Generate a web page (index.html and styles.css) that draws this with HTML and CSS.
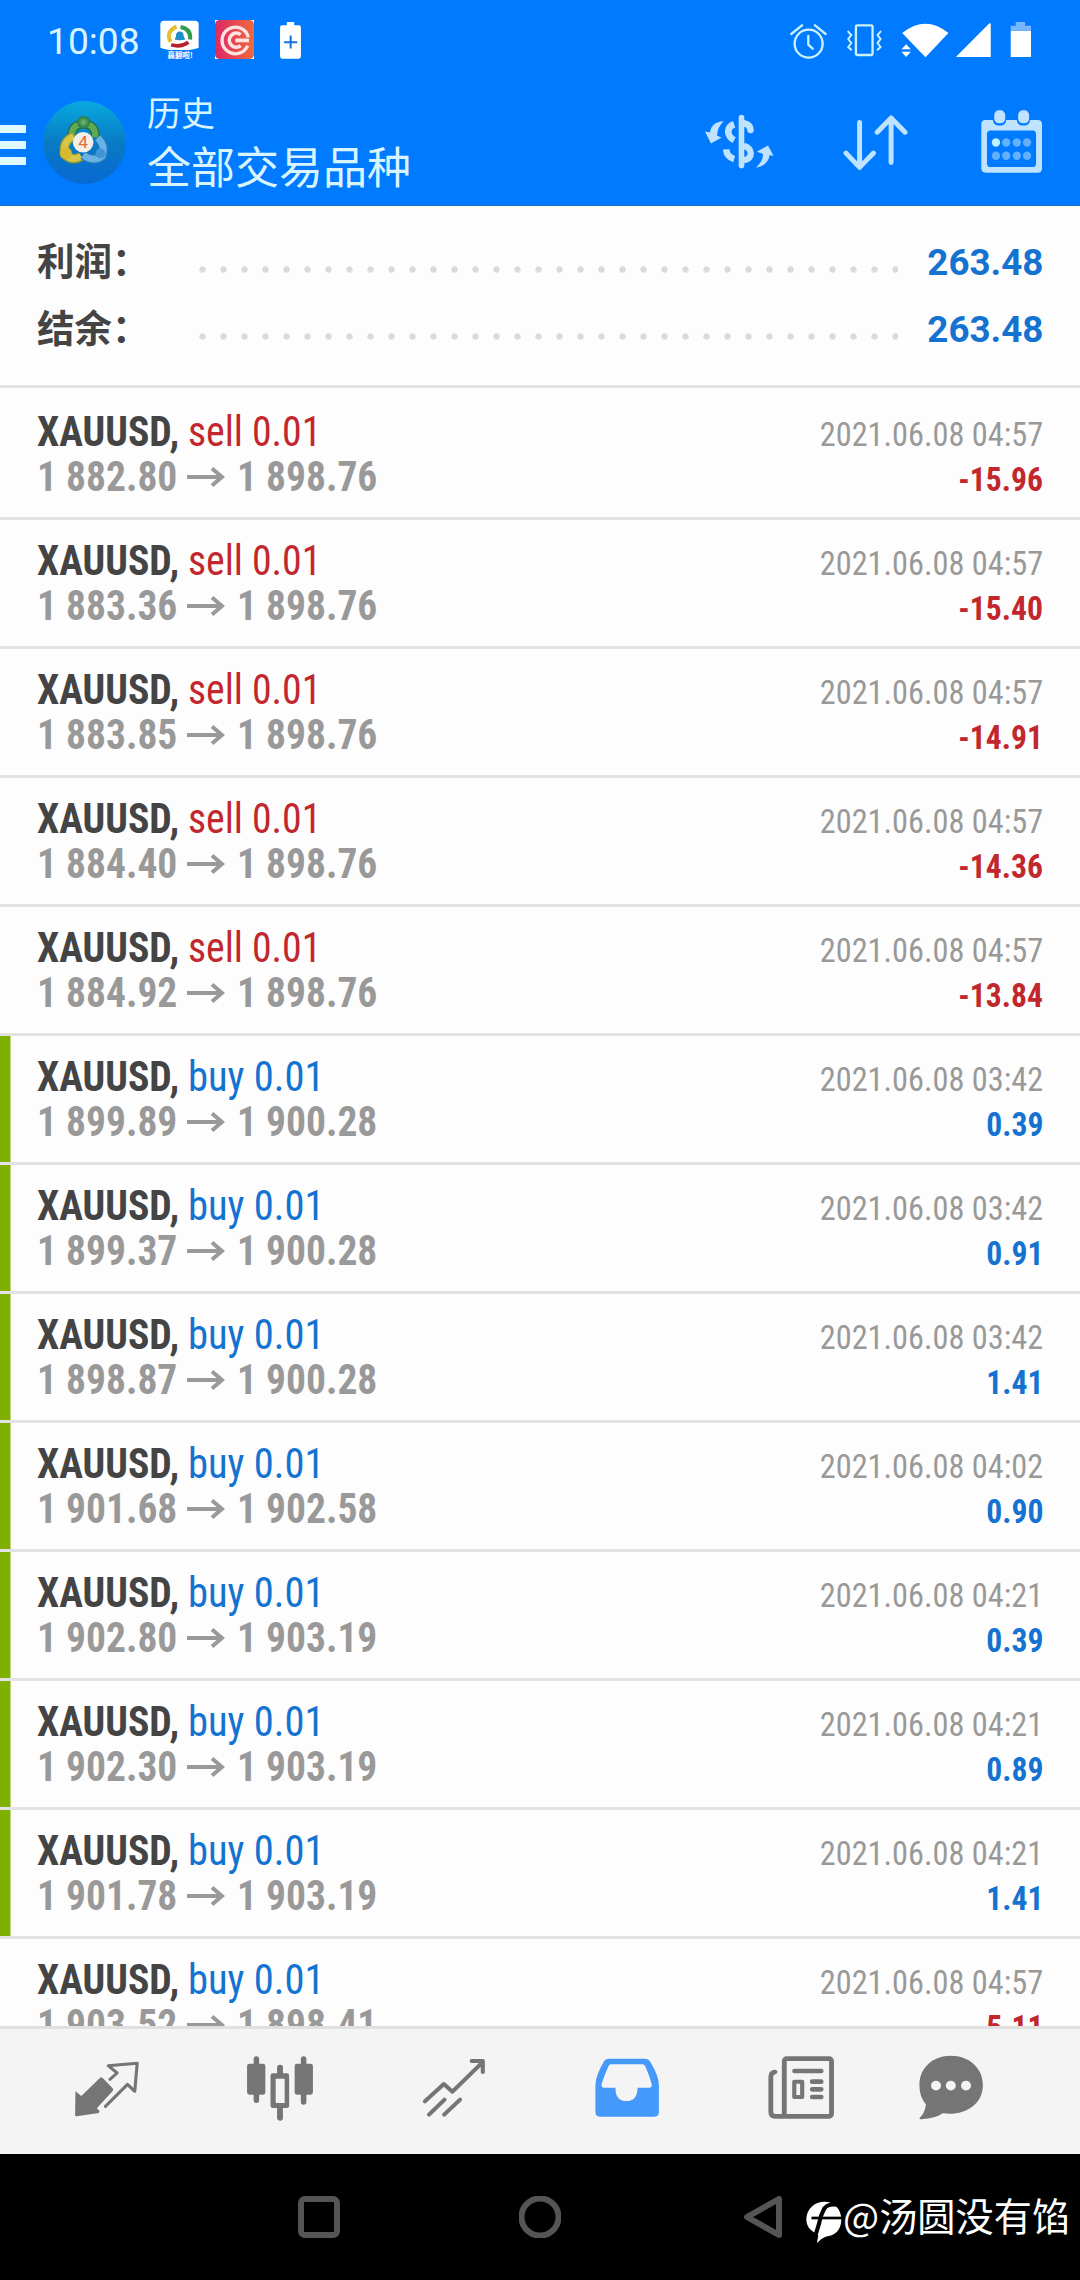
FILE: index.html
```html
<!DOCTYPE html>
<html lang="zh-CN">
<head>
<meta charset="utf-8">
<title>历史</title>
<link rel="stylesheet" href="styles.css">
</head>
<body>
<div class="screen">
  <header class="header">
    <div class="status">
      <div class="status-left">
        <span class="clock">10:08</span>
        <svg class="app-quotes" viewBox="480 58 118 118"><path fill="#fff" d="M492 60h94q11 0 11 11v70q0 2-28 8h-60q-28-6-28-8V71q0-11 11-11z"/><path fill="none" stroke="#e3c02e" stroke-width="12" d="M512 124q-16-30 18-46"/><path fill="none" stroke="#2f9e4f" stroke-width="12" d="M542 79q33 6 29 38"/><path fill="none" stroke="#b8202c" stroke-width="11" d="M514 133q28 9 52-8"/><path fill="#1d8fc8" d="M524 117q5-6 5-14 0-9 11-10 11 1 11 10 0 8 6 14-17 5-33 0z"/><text x="541" y="172" text-anchor="middle" font-size="24" font-weight="700" fill="#fff" textLength="76" lengthAdjust="spacingAndGlyphs">赢翻啦!</text></svg>
        <svg class="app-c" viewBox="645 60 117 117"><defs><linearGradient id="cg"><stop stop-color="#dc2866"/><stop offset="1" stop-color="#ef6a3c"/></linearGradient></defs><path fill="#fff" d="M645 60h117v117H645z"/><rect x="645" y="60" width="117" height="117" rx="14" fill="url(#cg)"/><path fill="none" stroke="#ffe3e0" stroke-width="10" d="M745 112A40 40 0 1 0 743 137"/><path fill="none" stroke="#ffe3e0" stroke-width="11" d="M722 104A21 21 0 1 0 722 137M706 121h41"/></svg>
        <svg class="battery-plus" viewBox="839 66 62 110"><path fill="#fff" d="M859 66h22v10h14q6 0 6 6v86q0 7-6 7h-50q-6 0-6-7V82q0-6 6-6h14z"/><path stroke="#1473d8" stroke-width="6" d="M851 126h39M870.500 106v39"/></svg>
      </div>
      <svg class="status-right" viewBox="330 60 730 120" fill="none">
        <g stroke="#cbf1ff" stroke-width="7" stroke-linecap="round"><circle cx="386" cy="131" r="42"/><path d="M385 108v26l13 12M334 102l32-26M405 76l32 26"/><rect x="528" y="76" width="50" height="89" rx="4"/><path d="M505 95l9 10-9 12 9 12-9 12 9 8M602 95l-9 10 9 12-9 12 9 12-9 8" stroke-width="6"/></g>
        <path fill="#fff" d="M667 99q70-56 139 0l-69 73zM665 148l14-15 14 15zM665 155h28l-14 16zM829 170L929 70q4-2 4 2v99h-102q-4 0-2-1zM993 92h61v79h-61z"/><path fill="#79b7fc" d="M1008 66h28v11h18v15h-61V77h15z"/>
      </svg>
    </div>
    <div class="toolbar">
      <div class="menu"><i></i><i></i><i></i></div>
      <svg class="logo" viewBox="130 300 250 256"><defs><linearGradient id="sky" x2="0" y2="1"><stop stop-color="#08aae0"/><stop offset=".5" stop-color="#087bc4"/><stop offset="1" stop-color="#0869d1"/></linearGradient><radialGradient id="gr"><stop stop-color="#73b978"/><stop offset="1" stop-color="#247842"/></radialGradient></defs><circle cx="255" cy="428" r="125" fill="url(#sky)"/><path fill="none" stroke="#217045" stroke-width="27" d="M217 412q-3-38 35-40 38 2 35 40"/><path fill="none" stroke="#61a951" stroke-width="19" d="M217 412q-3-38 35-40 38 2 35 40"/><path fill="none" stroke="#8e993c" stroke-width="28" d="M222 409q-34 15-27 55 24 22 50 6"/><path fill="none" stroke="#d7c646" stroke-width="20" d="M222 409q-34 15-27 55 24 22 50 6"/><path fill="none" stroke="#2879ba" stroke-width="28" d="M251 466q31 23 57 3 12-31-13-55"/><path fill="none" stroke="#67b3e5" stroke-width="20" d="M251 466q31 23 57 3 12-31-13-55"/><circle cx="252" cy="367" r="19" fill="url(#gr)"/><circle cx="199" cy="460" r="18" fill="#d7ba2e"/><circle cx="303" cy="461" r="15" fill="#4194d6"/><circle cx="251" cy="427" r="31" fill="#f4eee9"/><text x="251" y="446" text-anchor="middle" font-size="52" fill="#e06c3b">4</text></svg>
      <div class="titles"><h1>历史</h1><p>全部交易品种</p></div>
      <svg class="tool-currency" viewBox="77 342 208 164"><g fill="none" stroke="#bfe2ff" stroke-width="20"><path d="M187 352v144" stroke-width="17" stroke-linecap="round"/><path d="M165 372q-18 6-18 23 1 16 18 25"/><path d="M194 369q19 3 20 20" stroke-linecap="round"/><path d="M141 448q1 22 24 29"/><path d="M194 437q19 6 21 22 0 18-21 22" stroke-width="19"/></g><path fill="#bfe2ff" d="M133 362q-38 4-41 35l-15-3 18 36 32-18-13-5q-2-22 19-45zM231 503q37-7 41-38l12 3-17-32-34 19 18 6q4 18-20 42z"/></svg>
      <svg class="tool-sort" viewBox="490 342 196 170" fill="none" stroke="#bfe2ff" stroke-width="15" stroke-linecap="round" stroke-linejoin="round"><path d="M540 367v134M499 459l41 43 42-43M635 487V354M593 396l42-43 42 43"/></svg>
      <svg class="tool-calendar" viewBox="905 330 184 190"><path fill="#bfe2ff" fill-rule="evenodd" d="M919 360h157q13 0 13 13v133q0 13-13 13H919q-13 0-13-13V373q0-13 13-13zM934 392q-11 0-11 11v88q0 11 11 11h126q11 0 11-11v-88q0-11-11-11z"/><rect x="941" y="328" width="40" height="49" rx="17" fill="#007aff"/><rect x="1013" y="328" width="40" height="49" rx="17" fill="#007aff"/><rect x="945" y="331" width="33" height="39" rx="14" fill="#bfe2ff"/><rect x="1017" y="331" width="33" height="39" rx="14" fill="#bfe2ff"/><circle cx="950" cy="428" r="12.500" fill="#bff1ff"/><g fill="#63b0ff"><circle cx="981" cy="428" r="12.500"/><circle cx="1013" cy="428" r="12.500"/><circle cx="1044" cy="428" r="12.500"/><circle cx="950" cy="468" r="12.500"/><circle cx="981" cy="468" r="12.500"/><circle cx="1013" cy="468" r="12.500"/><circle cx="1044" cy="468" r="12.500"/></g></svg>
    </div>
  </header>

  <main class="content">
    <section class="summary">
      <div class="sum-row"><b>利润：</b><i class="dots"></i><strong>263.48</strong></div>
      <div class="sum-row"><b>结余：</b><i class="dots"></i><strong>263.48</strong></div>
    </section>
    <svg width="0" height="0" class="defs"><symbol id="arrow" viewBox="0 0 38 20"><path d="M0 10h35M25 1.500l10 8.500-10 8.500" fill="none" stroke="#999" stroke-width="4"/></symbol></svg>
    <section class="deals">
      <article class="deal first"><div class="line"><b>XAUUSD,</b><span class="sell">sell 0.01</span><time>2021.06.08 04:57</time></div><div class="line price"><span>1 882.80</span><svg><use href="#arrow"/></svg><span>1 898.76</span><em class="loss">-15.96</em></div></article>
      <article class="deal"><div class="line"><b>XAUUSD,</b><span class="sell">sell 0.01</span><time>2021.06.08 04:57</time></div><div class="line price"><span>1 883.36</span><svg><use href="#arrow"/></svg><span>1 898.76</span><em class="loss">-15.40</em></div></article>
      <article class="deal"><div class="line"><b>XAUUSD,</b><span class="sell">sell 0.01</span><time>2021.06.08 04:57</time></div><div class="line price"><span>1 883.85</span><svg><use href="#arrow"/></svg><span>1 898.76</span><em class="loss">-14.91</em></div></article>
      <article class="deal"><div class="line"><b>XAUUSD,</b><span class="sell">sell 0.01</span><time>2021.06.08 04:57</time></div><div class="line price"><span>1 884.40</span><svg><use href="#arrow"/></svg><span>1 898.76</span><em class="loss">-14.36</em></div></article>
      <article class="deal"><div class="line"><b>XAUUSD,</b><span class="sell">sell 0.01</span><time>2021.06.08 04:57</time></div><div class="line price"><span>1 884.92</span><svg><use href="#arrow"/></svg><span>1 898.76</span><em class="loss">-13.84</em></div></article>
      <article class="deal tp"><div class="line"><b>XAUUSD,</b><span class="buy">buy 0.01</span><time>2021.06.08 03:42</time></div><div class="line price"><span>1 899.89</span><svg><use href="#arrow"/></svg><span>1 900.28</span><em>0.39</em></div></article>
      <article class="deal tp"><div class="line"><b>XAUUSD,</b><span class="buy">buy 0.01</span><time>2021.06.08 03:42</time></div><div class="line price"><span>1 899.37</span><svg><use href="#arrow"/></svg><span>1 900.28</span><em>0.91</em></div></article>
      <article class="deal tp"><div class="line"><b>XAUUSD,</b><span class="buy">buy 0.01</span><time>2021.06.08 03:42</time></div><div class="line price"><span>1 898.87</span><svg><use href="#arrow"/></svg><span>1 900.28</span><em>1.41</em></div></article>
      <article class="deal tp"><div class="line"><b>XAUUSD,</b><span class="buy">buy 0.01</span><time>2021.06.08 04:02</time></div><div class="line price"><span>1 901.68</span><svg><use href="#arrow"/></svg><span>1 902.58</span><em>0.90</em></div></article>
      <article class="deal tp"><div class="line"><b>XAUUSD,</b><span class="buy">buy 0.01</span><time>2021.06.08 04:21</time></div><div class="line price"><span>1 902.80</span><svg><use href="#arrow"/></svg><span>1 903.19</span><em>0.39</em></div></article>
      <article class="deal tp"><div class="line"><b>XAUUSD,</b><span class="buy">buy 0.01</span><time>2021.06.08 04:21</time></div><div class="line price"><span>1 902.30</span><svg><use href="#arrow"/></svg><span>1 903.19</span><em>0.89</em></div></article>
      <article class="deal tp"><div class="line"><b>XAUUSD,</b><span class="buy">buy 0.01</span><time>2021.06.08 04:21</time></div><div class="line price"><span>1 901.78</span><svg><use href="#arrow"/></svg><span>1 903.19</span><em>1.41</em></div></article>
      <article class="deal"><div class="line"><b>XAUUSD,</b><span class="buy">buy 0.01</span><time>2021.06.08 04:57</time></div><div class="line price"><span>1 903.52</span><svg><use href="#arrow"/></svg><span>1 898.41</span><em class="loss">5.11</em></div></article>
    </section>
  </main>

  <nav class="tabs">
    <svg viewBox="210 460 203 210" preserveAspectRatio="none" fill="#757575"><path d="M220 575l17 14 54-54q4-4 8 0l29 31q3 4 0 8l-46 52 8 8-2 6-65 10q-4 0-4-4z"/><path fill="none" stroke="#757575" stroke-width="9" stroke-linejoin="round" stroke-linecap="round" d="M320 539l21-19-26-22 84-7-7 84-21-21-64 66"/></svg>
    <svg viewBox="712 460 203 210" preserveAspectRatio="none" fill="#757575"><path d="M737 492v-14q0-8 8-8t8 8v14h11q7 0 7 7v79q0 7-7 7h-11v17q0 8-8 8t-8-8v-17h-12q-7 0-7-7v-79q0-7 7-7zM874 492v-14q0-8 8-8t8 8v14h12q7 0 7 7v79q0 7-7 7h-12v22q0 8-8 8t-8-8v-22h-11q-7 0-7-7v-79q0-7 7-7z"/><path fill-rule="evenodd" d="M805 521v-18q0-8 9-8t8 8v18h11q7 0 7 7v90q0 7-7 7h-11v30q0 8-8 8t-9-8v-30h-12q-7 0-7-7v-90q0-7 7-7zM801 537v73h26v-73z"/></svg>
    <svg viewBox="1215 460 203 210" preserveAspectRatio="none" fill="none" stroke="#757575" stroke-width="12" stroke-linecap="round" stroke-linejoin="round"><path d="M1232 605l55-52 25 23 87-88M1368 484h32v33M1244 645l45-45M1288 645l46-45"/></svg>
    <svg viewBox="152 460 203 210" preserveAspectRatio="none"><path fill="#4499fb" fill-rule="evenodd" d="M201 477h104q11 0 16 9 25 43 25 70v81q0 14-13 14H175q-13 0-13-14v-81q0-27 24-70 5-9 15-9zM207 494q-5 0-8 7-10 22-19 52-2 11 7 11h33q0 40 31 40 33 0 33-40h34q9 0 7-11-8-30-18-52-3-7-9-7z"/></svg>
    <svg viewBox="658 460 203 210" preserveAspectRatio="none" fill="none" stroke="#757575" stroke-width="14" stroke-linecap="round" stroke-linejoin="round"><rect x="711" y="477" width="137" height="173" rx="7"/><path d="M684 517q-12 2-12 15v104q0 14 13 14h26"/><path d="M741 514h77M792 546h26M792 569h26M792 592h26"/><path stroke-width="12" d="M740 546h23v46h-23z"/></svg>
    <svg viewBox="1092 460 203 210" preserveAspectRatio="none"><path fill="#757575" d="M1193 468c54 0 93 38 93 87 0 60-52 94-116 86q-22 15-62 18-10 0-4-6 14-13 17-39c-13-16-19-34-19-59 0-49 37-87 91-87z"/><g fill="#f4f4f4"><circle cx="1150" cy="558" r="14.500"/><circle cx="1193" cy="558" r="14.500"/><circle cx="1237" cy="558" r="14.500"/></g></svg>
  </nav>

  <footer class="sysbar">
    <svg class="recent" viewBox="0 0 42 42"><rect x="3" y="3" width="36" height="36" rx="4"/></svg>
    <svg class="home" viewBox="0 0 42 42"><circle cx="21" cy="21" r="18.500"/></svg>
    <svg class="back" viewBox="0 0 39 42"><path d="M36 3v36L4 21z"/></svg>
    <div class="signature"><svg viewBox="771 903 105 126" preserveAspectRatio="none"><path fill="#fff" d="M825 905c28 0 49 22 49 53 0 34-20 50-46 52q-15 6-25 19 1-10 4-22l-15-12c-13-7-20-22-20-37 0-31 24-53 53-53z"/><path fill="none" stroke="#000" stroke-width="12" d="M862 914q-28-4-38 12-11 20-15 45l-10 34"/><path stroke="#000" stroke-width="8" d="M787 954h90"/></svg><span>@汤圆没有馅</span></div>
  </footer>
</div>
</body>
</html>
```
FILE: styles.css
```css
* { box-sizing: border-box; }
body { margin: 0; background: #000; font-family: Roboto, "Noto Sans CJK SC", sans-serif; }
svg { display: block; flex: none; }
.screen { width: 1080px; height: 2280px; display: flex; flex-direction: column; overflow: hidden; }

.header { height: 206px; flex: none; background: #007aff; border-bottom: 1px solid #1c69bd; color: #d8f5ff; }
.status { height: 82px; padding: 20px 47px 0 47px; display: flex; justify-content: space-between; }
.status-left { display: flex; }
.clock { font-size: 37.2px; line-height: 42px; width: 113px; }
.app-quotes { width: 39px; height: 39px; font-family: "Noto Sans CJK SC", sans-serif; }
.app-c { width: 39px; height: 39px; margin-left: 16px; }
.battery-plus { width: 21px; height: 37px; margin: 2px 0 0 26px; }
.status-right { width: 243px; height: 40px; }

.toolbar { height: 123px; display: flex; align-items: flex-start; }
.menu { width: 26px; margin-top: 43px; display: flex; flex-direction: column; gap: 8.5px; }
.menu i { height: 7.5px; background: #dff7ff; }
.logo { width: 83px; height: 85px; margin: 18px 0 0 17px; }
.titles { margin: 9px 0 0 21px; width: 558px; font-family: "Noto Sans CJK SC", sans-serif; }
.titles h1 { margin: 0; font-size: 34px; line-height: 42px; font-weight: 400; }
.titles p { margin: 0; font-size: 44px; line-height: 64px; }
.tool-currency { width: 69px; height: 55px; margin-top: 32px; }
.tool-sort { width: 65px; height: 57px; margin: 32px 0 0 69px; }
.tool-calendar { width: 61px; height: 63px; margin: 28px 0 0 73px; }

.content { height: 1820px; flex: none; overflow: hidden; background: #fdfdfd; }
.summary { height: 182px; padding: 19px 37px 0; border-bottom: 3px solid #e2e2e2; }
.sum-row { height: 67px; display: flex; align-items: center; }
.sum-row b { width: 160px; flex: none; font: 700 37.5px "Noto Sans CJK SC", sans-serif; line-height: 67px; color: #444; }
.dots { width: 706px; height: 7px; margin: 22px 0 0 -5px; background: radial-gradient(circle at 10.5px 3.5px, #dadada 2.7px, transparent 3.7px) 0 0 / 21px 7px repeat-x; }
.sum-row strong { margin: 7px 0 0 auto; font-size: 37.5px; font-weight: 700; color: #1473d0; transform: scaleX(.98); transform-origin: right; }
.defs { position: absolute; }

.deal { height: 129px; padding: 18px 37px 0 37px; border-bottom: 3px solid #e2e2e2; font-family: "Roboto Condensed", Roboto, sans-serif; }
.deal.first { height: 132px; padding-top: 21px; }
.deal.tp { background: linear-gradient(#7fb000, #7fb000) 0 0 / 10.5px 100% no-repeat; }
.line { height: 45px; line-height: 45px; display: flex; align-items: baseline; font-size: 42px; white-space: pre; }

/* Slightly narrower than the stock condensed face */
.line b, .line span { flex: none; transform: scaleX(.945); transform-origin: left; }
.line time, .line em { margin-left: auto; transform: scaleX(.95); transform-origin: right; font-size: 34px; }
.line b { width: 150.5px; color: #444; }
.line .sell { color: #c1272d; }
.line .buy { color: #1473d0; transform: scaleX(.965); }
.line time { color: #999; }
.line em { font-style: normal; font-weight: 700; color: #1473d0; transform: scaleX(.93); }
.line em.loss { color: #c1272d; }
.price span { font-weight: 700; color: #999; width: 150px; transform: scaleX(.94); }
.price svg { width: 38px; height: 20px; margin-right: 12px; align-self: center; }

.tabs { height: 128px; flex: none; padding-left: 20px; border-top: 3px solid #e0e0e0; background: #f4f4f4; display: grid; grid-template-columns: repeat(5, 173.5px) 126px; justify-items: center; }
.tabs svg { width: 70px; height: 70px; margin-top: 24px; }

.sysbar { flex: 1; background: #000; display: flex; align-items: flex-start; padding: 42px 0 0 298px; }
.sysbar svg { fill: none; stroke: #555; stroke-width: 6; stroke-linejoin: round; }
.recent, .home { width: 42px; height: 42px; }
.home { margin-left: 179px; }
.back { width: 39px; height: 42px; margin-left: 182px; }
.signature { display: flex; margin: -5px 0 0 24px; color: #fff; font: 38.2px/48px "Noto Sans CJK SC", sans-serif; white-space: nowrap; }
.sysbar .signature svg { width: 36px; height: 42px; margin: 10px 1px 0 0; stroke: none; }
```
